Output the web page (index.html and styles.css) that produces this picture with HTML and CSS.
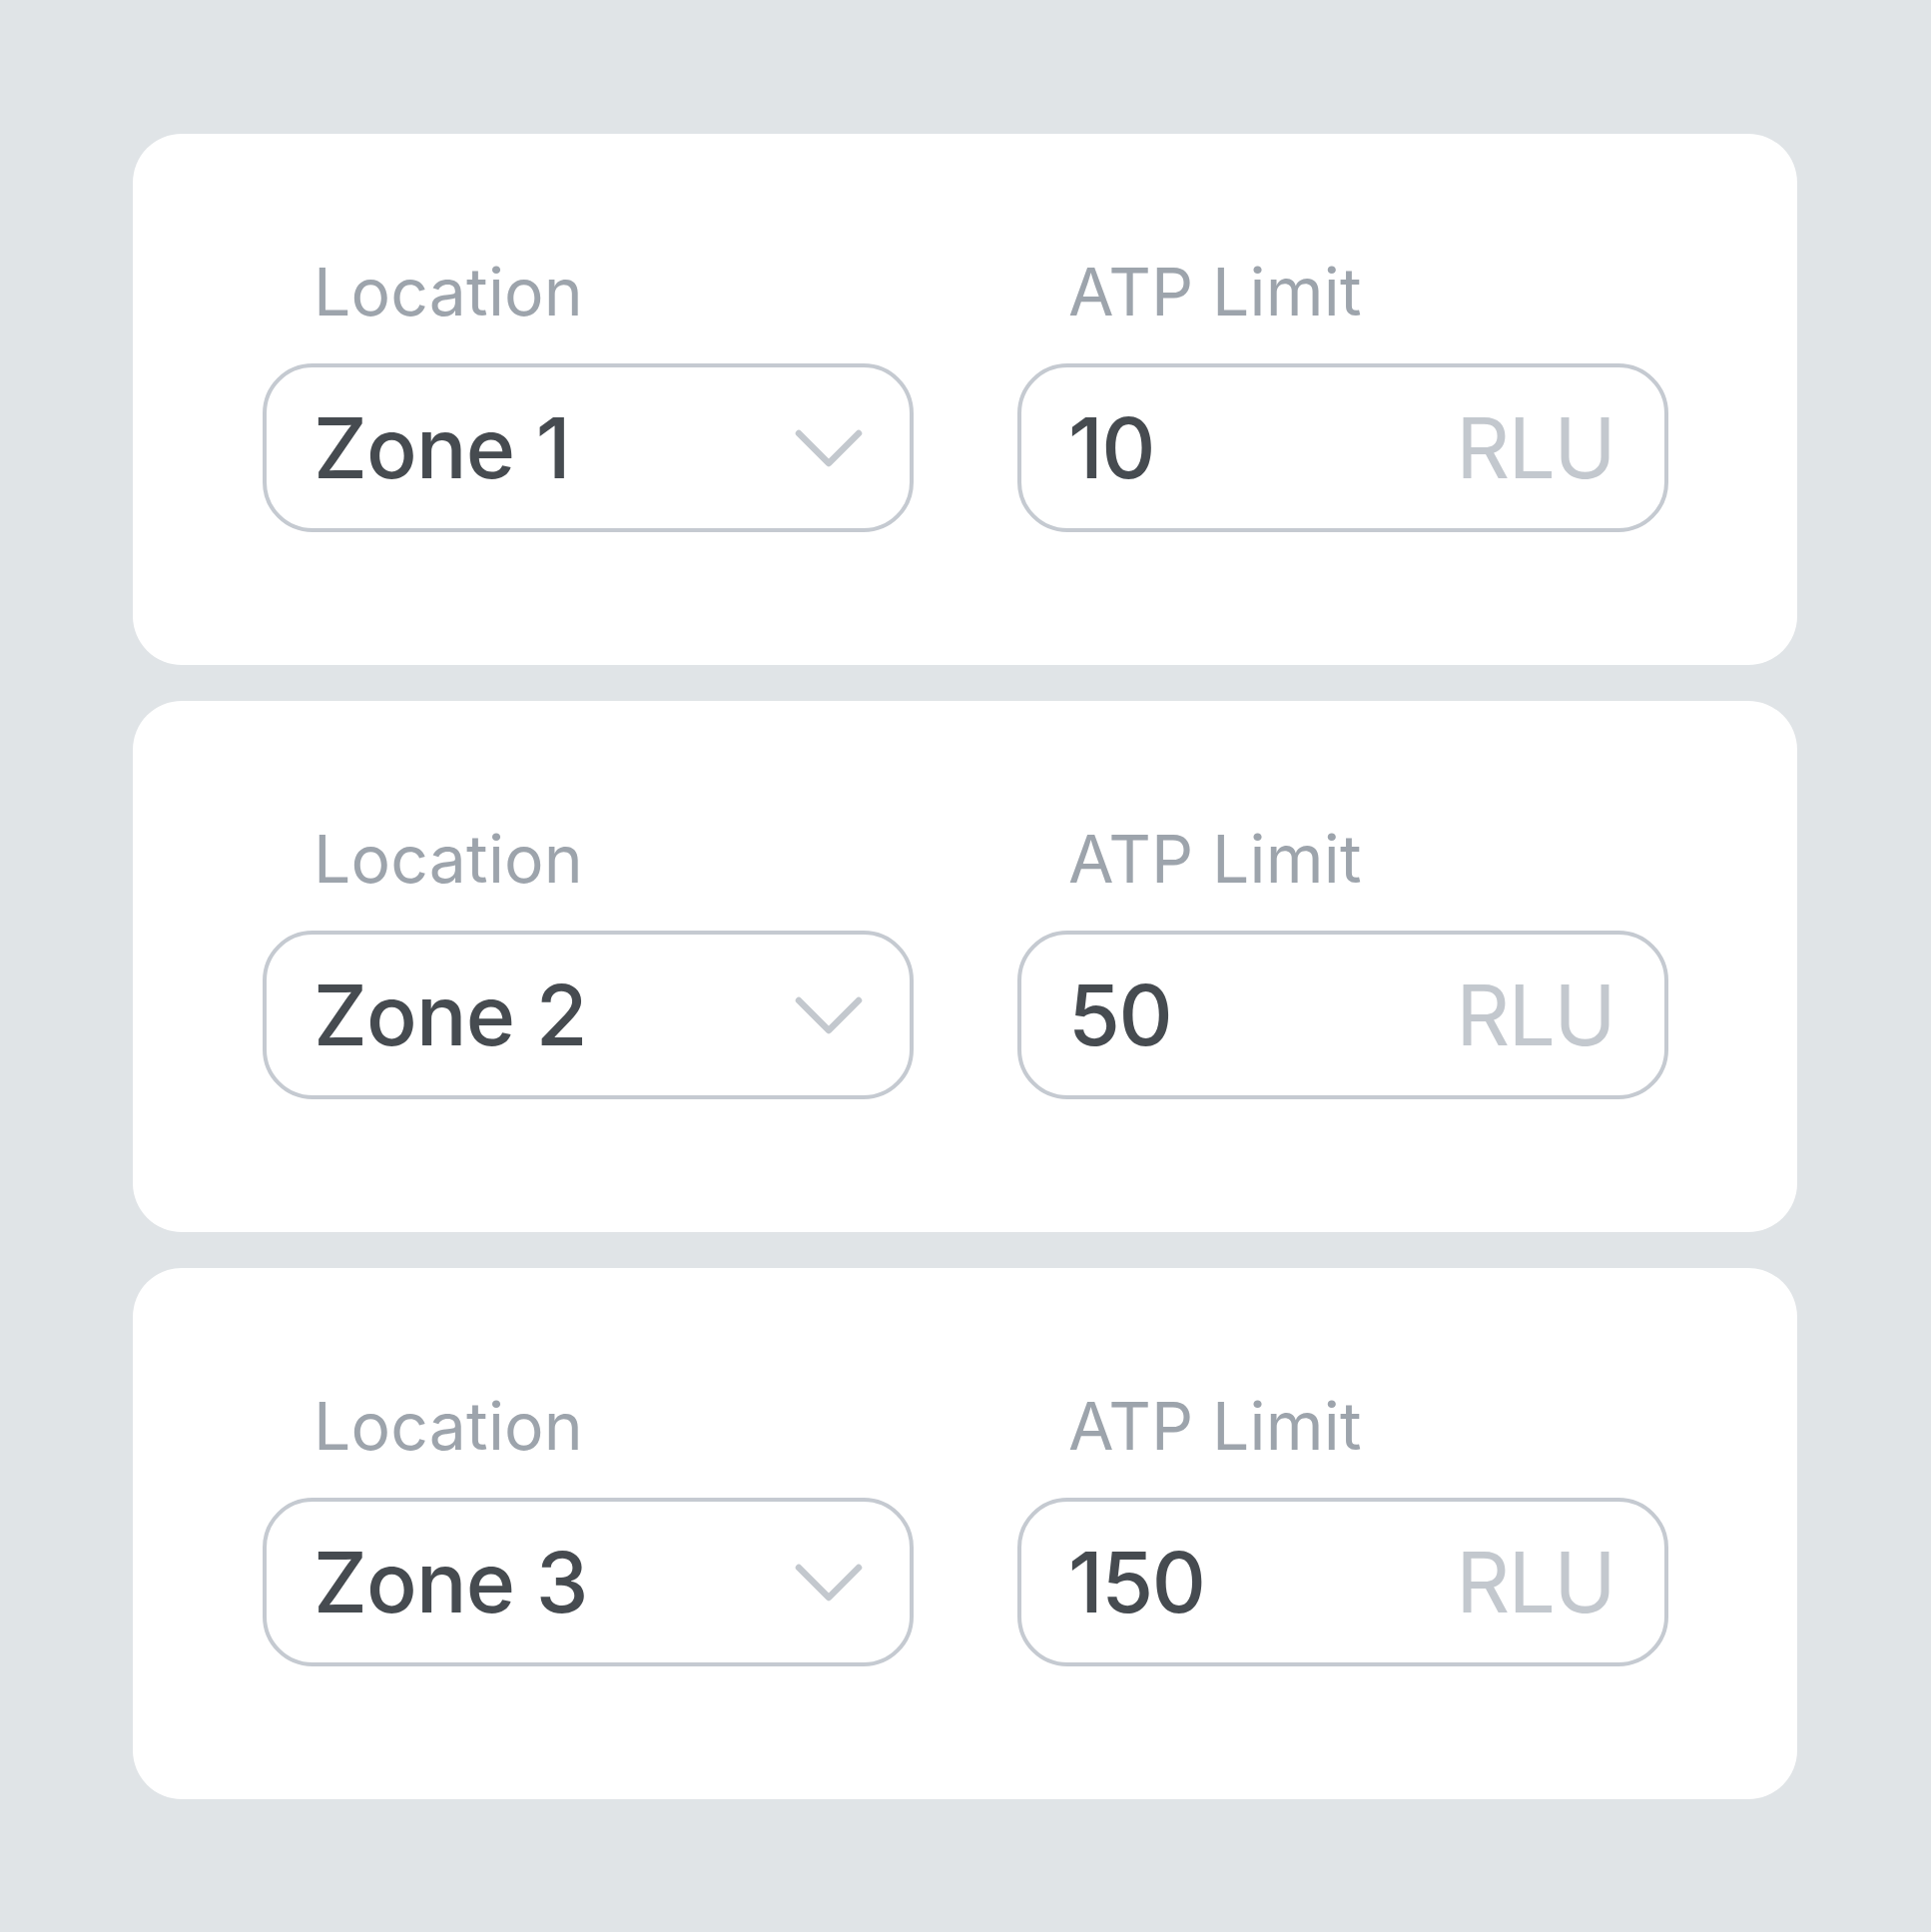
FILE: index.html
```html
<!DOCTYPE html>
<html lang="en">
<head>
<meta charset="utf-8">
<title>ATP Limits</title>
<link rel="stylesheet" href="styles.css">
</head>
<body>
<main class="page">
  <section class="card">
    <div class="field">
      <div class="label">Location</div>
      <div class="box select">
        <span class="value zone">Zone 1</span>
        <svg class="chevron" width="68" height="38" viewBox="0 0 68 38"><path d="M4 4 L34 34 L64 4" fill="none" stroke="#c3c8ce" stroke-width="6.5" stroke-linecap="round" stroke-linejoin="round"/></svg>
      </div>
    </div>
    <div class="field">
      <div class="label">ATP Limit</div>
      <div class="box input">
        <span class="value">10</span>
        <span class="unit">RLU</span>
      </div>
    </div>
  </section>
  <section class="card">
    <div class="field">
      <div class="label">Location</div>
      <div class="box select">
        <span class="value zone">Zone 2</span>
        <svg class="chevron" width="68" height="38" viewBox="0 0 68 38"><path d="M4 4 L34 34 L64 4" fill="none" stroke="#c3c8ce" stroke-width="6.5" stroke-linecap="round" stroke-linejoin="round"/></svg>
      </div>
    </div>
    <div class="field">
      <div class="label">ATP Limit</div>
      <div class="box input">
        <span class="value">50</span>
        <span class="unit">RLU</span>
      </div>
    </div>
  </section>
  <section class="card">
    <div class="field">
      <div class="label">Location</div>
      <div class="box select">
        <span class="value zone">Zone 3</span>
        <svg class="chevron" width="68" height="38" viewBox="0 0 68 38"><path d="M4 4 L34 34 L64 4" fill="none" stroke="#c3c8ce" stroke-width="6.5" stroke-linecap="round" stroke-linejoin="round"/></svg>
      </div>
    </div>
    <div class="field">
      <div class="label">ATP Limit</div>
      <div class="box input">
        <span class="value">150</span>
        <span class="unit">RLU</span>
      </div>
    </div>
  </section>
</main>
</body>
</html>
```
FILE: styles.css
```css
html, body {
  margin: 0;
  padding: 0;
  background: #e0e4e7;
}
body {
  font-family: Inter, "Noto Sans", "Liberation Sans", sans-serif;
  width: 1934px;
  min-height: 1935px;
}
.page {
  box-sizing: border-box;
  padding: 134px 134px 133px 133px;
  display: flex;
  flex-direction: column;
  gap: 36px;
}
.card {
  box-sizing: border-box;
  height: 532px;
  background: #ffffff;
  border-radius: 49px;
  padding: 125px 129px 0 130px;
  display: grid;
  grid-template-columns: 1fr 1fr;
  column-gap: 104px;
  align-content: start;
}
.field {
  display: flex;
  flex-direction: column;
  gap: 39px;
}
.label {
  font-size: 66px;
  line-height: 66px;
  color: #9da4ac;
  padding-left: 51px;
  font-weight: 400;
  letter-spacing: 0.2px;
}
.box {
  box-sizing: border-box;
  height: 169px;
  border: 4px solid #c5cad1;
  border-radius: 50px;
  display: flex;
  align-items: center;
  justify-content: space-between;
  padding: 0 44px 0 47px;
}
.select {
  padding-right: 47px;
}
.value {
  font-size: 84px;
  line-height: 84px;
  color: #464b50;
  font-weight: 500;
  letter-spacing: -1.5px;
}
.zone {
  letter-spacing: -0.8px;
}
.unit {
  font-size: 84px;
  line-height: 84px;
  color: #c3c8ce;
  font-weight: 400;
  letter-spacing: -1.8px;
  padding-right: 6px;
}
.chevron {
  display: block;
}
```
